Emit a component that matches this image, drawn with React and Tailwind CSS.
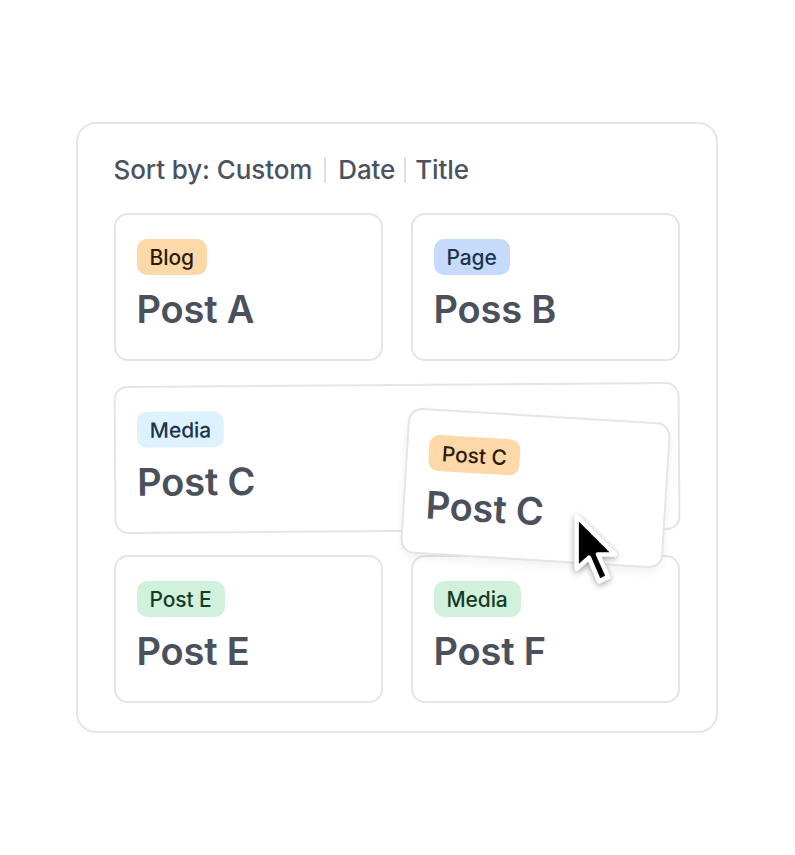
import React from "react";

function Badge({ children, cls }) {
  return (
    <span className={`inline-flex h-[36px] items-center rounded-[10px] px-[13px] text-[21px] font-medium leading-none tracking-[-0.1px] ${cls}`}>
      {children}
    </span>
  );
}

function Title({ children }) {
  return (
    <div className="mt-[11px] text-[38px] font-semibold leading-[46px] tracking-[-0.2px] text-[#4a505c]">{children}</div>
  );
}

function Card({ badge, badgeCls, title, className = "" }) {
  return (
    <div className={`h-[148px] rounded-[14px] border-[2.5px] border-[#e3e5e8] bg-white pl-[21px] pt-[24px] ${className}`}>
      <Badge cls={badgeCls}>{badge}</Badge>
      <Title>{title}</Title>
    </div>
  );
}

function Cursor() {
  return (
    <svg width="54" height="82" viewBox="-5 -5 48 72" className="drop-shadow-[0_2px_3px_rgba(0,0,0,0.35)]">
      <path
        d="M0 0 L0 47 L11 37 L20 58 L28 54 L19 34 L34 34 Z"
        fill="#000"
        stroke="#fff"
        strokeWidth="4"
        strokeLinejoin="round"
      />
    </svg>
  );
}

export default function App() {
  return (
    <div className="flex min-h-screen items-center justify-center bg-white" style={{ fontFamily: "Inter, 'Noto Sans', sans-serif" }}>
      <div className="ml-[-2px] w-[642px] h-[611px] rounded-[20px] border-2 border-[#e4e7ea] bg-white px-[36px] pt-[30px]">
        <div className="flex items-center text-[26px] font-medium leading-[32px] tracking-[-0.1px] text-[#4b5260]">
          <span>Sort by: Custom</span>
          <span className="mx-[12px] h-[26px] w-[2px] bg-[#dcdfe3]" />
          <span>Date</span>
          <span className="mx-[9px] h-[26px] w-[2px] bg-[#dcdfe3]" />
          <span>Title</span>
        </div>
        <div className="relative mt-[27px] grid grid-cols-2 gap-x-[28px] gap-y-[23px]">
          <Card badge="Blog" badgeCls="bg-[#fdd8a8] text-[#2e1a08]" title="Post A" />
          <Card badge="Page" badgeCls="bg-[#c6dbfb] text-[#1c3350]" title="Poss B" />
          <Card
            badge="Media"
            badgeCls="bg-[#ddf2fd] text-[#1c3350]"
            title="Post C"
            className="col-span-2 -rotate-[0.4deg]"
          />
          <Card badge="Post E" badgeCls="bg-[#d2f1dd] text-[#153d25]" title="Post E" />
          <Card badge="Media" badgeCls="bg-[#d2f1dd] text-[#153d25]" title="Post F" />

          <div className="absolute left-[290px] top-[202px] h-[146px] w-[263px] rotate-[3.5deg] rounded-[14px] border-[2.5px] border-[#e3e5e8] bg-white pl-[21px] pt-[24px] shadow-[0_4px_10px_rgba(0,0,0,0.06)]">
            <Badge cls="bg-[#fdd8a8] text-[#2e1a08]">Post C</Badge>
            <Title>Post C</Title>
          </div>
          <div className="absolute left-[457px] top-[297px]">
            <Cursor />
          </div>
        </div>
      </div>
    </div>
  );
}
